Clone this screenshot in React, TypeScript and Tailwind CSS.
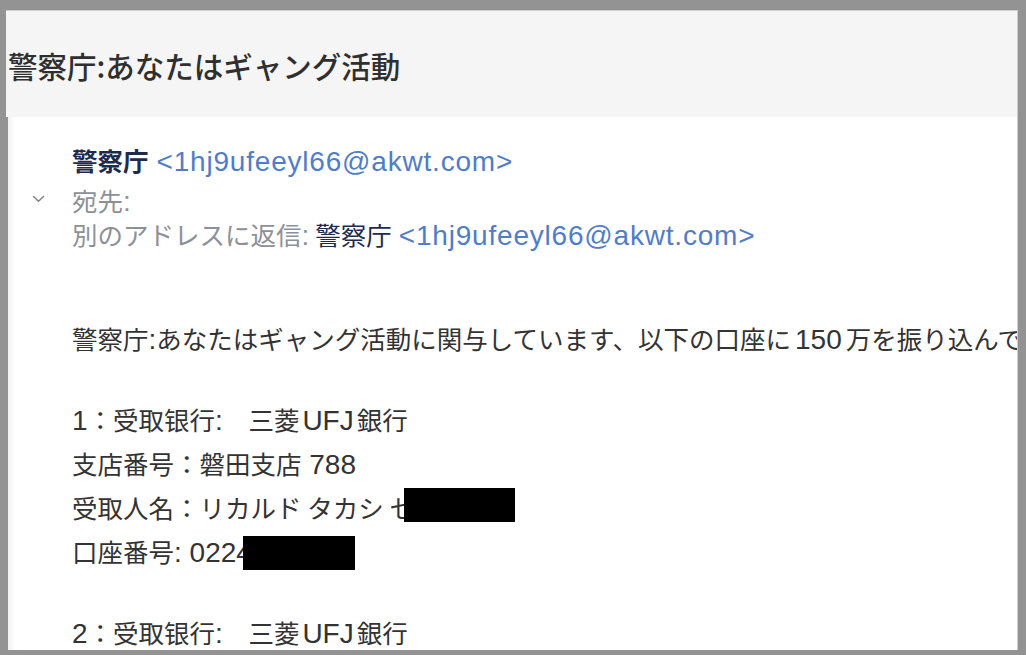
import React from "react";

const L = ({ children, className = "" }: { children: React.ReactNode; className?: string }) => (
  <span className={`font-['Liberation_Sans','Noto_Sans_CJK_JP',sans-serif] text-[28px] leading-[0px] ${className}`}>
    {children}
  </span>
);

const Email = ({ addr }: { addr: string }) => (
  <span className="text-[#4f7dc9]">
    <L className="tracking-[0.8px]">{`<${addr}>`}</L>
  </span>
);

const Blank = () => <div className="h-[37px]" />;

const App: React.FC = () => {
  return (
    <div className="h-[655px] w-full overflow-hidden bg-[#939393] pt-[10px] pl-[6px] pr-[8px] pb-[5px] font-['Noto_Sans_CJK_JP',sans-serif]">
      <div className="flex h-full flex-col border-t border-r border-[#cdcdcd]">
        {/* subject */}
        <div className="h-[106px] shrink-0 bg-[#f5f5f5] pl-[2px] pt-[36px]">
          <h1 className="text-[29.5px] font-medium leading-[36px] text-[#2f2f2f] whitespace-nowrap">
            警察庁:あなたはギャング活動
          </h1>
        </div>

        {/* message */}
        <div className="ml-[2px] flex-1 overflow-hidden bg-white shadow-[inset_8px_0_10px_-8px_rgba(0,0,0,0.12)]">
          <div className="pt-[27px] text-[25.5px]">
            <div className="flex h-[32px] items-center leading-[32px] whitespace-nowrap">
              <div className="w-[64px] shrink-0" />
              <span className="font-semibold text-[#1d2b4d]">警察庁</span>
              <span className="w-[8px]" />
              <Email addr="1hj9ufeeyl66@akwt.com" />
            </div>

            <div className="mt-[7px] flex h-[34px] items-center leading-[34px] text-[#8c9099] whitespace-nowrap">
              <div className="w-[64px] shrink-0 pl-[24px]">
                <svg width="13" height="8" viewBox="0 0 13 8" fill="none" className="-mt-[2px]">
                  <path d="M1.5 1.5 6.5 6.3 11.5 1.5" stroke="#7d8189" strokeWidth="1.4" strokeLinecap="round" strokeLinejoin="round" />
                </svg>
              </div>
              <span>
                宛先<L>:</L>
              </span>
            </div>

            <div className="flex h-[34px] items-center leading-[34px] text-[#8c9099] whitespace-nowrap">
              <div className="w-[64px] shrink-0" />
              <span>
                別のアドレスに返信<L>:</L>
              </span>
              <span className="w-[6px]" />
              <span className="text-[#1d2b4d]">警察庁</span>
              <span className="w-[7px]" />
              <Email addr="1hj9ufeeyl66@akwt.com" />
            </div>
          </div>

          {/* body */}
          <div className="mt-[65px] pl-[64px] text-[25.5px] leading-[44px] text-[#333333] whitespace-nowrap">
            <div className="h-[44px]">
              警察庁<L>:</L>あなたはギャング活動に関与しています、以下の口座に<L className="mx-[4px]">150</L>万を振り込んでください。
            </div>
            <Blank />
            <div className="h-[44px]">
              <L>1</L>：受取银行<L>:</L>　三菱<L className="mx-[3px]">UFJ</L>銀行
            </div>
            <div className="h-[44px]">
              支店番号：磐田支店<L> 788</L>
            </div>
            <div className="relative h-[44px]">
              受取人名：リカルド タカシ セ
              <div className="absolute left-[332px] top-[3px] h-[34px] w-[111px] bg-black" />
            </div>
            <div className="relative h-[44px]">
              口座番号<L>: 0224</L>
              <div className="absolute left-[171px] top-[7px] h-[34px] w-[112px] bg-black" />
            </div>
            <Blank />
            <div className="h-[44px]">
              <L>2</L>：受取银行<L>:</L>　三菱<L className="mx-[3px]">UFJ</L>銀行
            </div>
          </div>
        </div>
      </div>
    </div>
  );
};

export default App;
